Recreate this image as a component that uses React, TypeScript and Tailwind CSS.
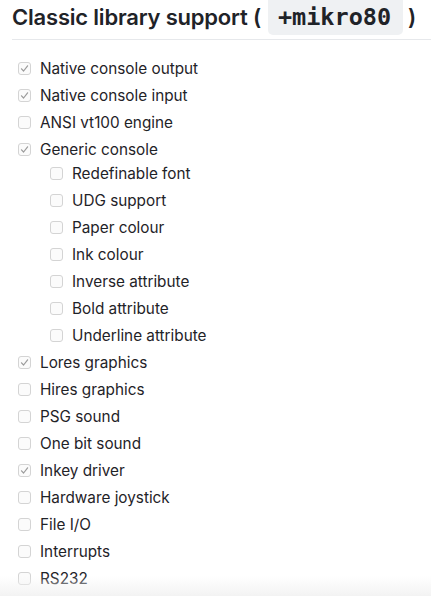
import React from "react";

type Item = { label: string; checked?: boolean; children?: Item[] };

const items: Item[] = [
  { label: "Native console output", checked: true },
  { label: "Native console input", checked: true },
  { label: "ANSI vt100 engine" },
  {
    label: "Generic console",
    checked: true,
    children: [
      { label: "Redefinable font" },
      { label: "UDG support" },
      { label: "Paper colour" },
      { label: "Ink colour" },
      { label: "Inverse attribute" },
      { label: "Bold attribute" },
      { label: "Underline attribute" },
    ],
  },
  { label: "Lores graphics", checked: true },
  { label: "Hires graphics" },
  { label: "PSG sound" },
  { label: "One bit sound" },
  { label: "Inkey driver", checked: true },
  { label: "Hardware joystick" },
  { label: "File I/O" },
  { label: "Interrupts" },
  { label: "RS232" },
];

function Box({ checked }: { checked?: boolean }) {
  return (
    <span className="flex h-[13px] w-[13px] shrink-0 items-center justify-center rounded-[3px] border border-[#d4d4d4] bg-[#fbfbfb]">
      {checked && (
        <svg width="9" height="9" viewBox="0 0 9 9" fill="none">
          <path d="M1.5 4.8 L3.6 7 L7.6 1.8" stroke="#9a9a9a" strokeWidth="1.2" strokeLinecap="round" strokeLinejoin="round" />
        </svg>
      )}
    </span>
  );
}

function List({ data, nested }: { data: Item[]; nested?: boolean }) {
  return (
    <ul className={nested ? "flex flex-col gap-[4px] pl-[32px]" : "flex flex-col gap-[4px] pl-[18px]"}>
      {data.map((it) => (
        <li key={it.label} className="flex flex-col gap-[1px]">
          <div className="flex h-[23px] items-center gap-[9px]">
            <Box checked={it.checked} />
            <span className="whitespace-nowrap">{it.label}</span>
          </div>
          {it.children && <List data={it.children} nested />}
        </li>
      ))}
    </ul>
  );
}

export default function App() {
  return (
    <div
      className="relative h-[596px] w-[431px] overflow-hidden bg-white text-[15.3px] leading-[23px] text-[#1f2328]"
      style={{ fontFamily: "Inter, 'Liberation Sans', sans-serif" }}
    >
      <div className="pl-3">
        <h2 className="flex h-[40px] items-start border-b border-[#e6e8eb] text-[22px] font-semibold leading-[35px] tracking-[-0.2px]">
          <span className="whitespace-nowrap">Classic library support (</span>
          <code
            className="ml-[7px] mr-[5px] rounded-b-[5px] bg-[#eff1f3] pl-[10px] pr-[12px] text-[23.5px] font-bold leading-[35px] tracking-[0px]"
            style={{ fontFamily: "'DejaVu Sans Mono', 'Liberation Mono', monospace" }}
          >
            +mikro80
          </code>
          <span>)</span>
        </h2>
      </div>
      <div className="pt-[16.5px]">
        <List data={items} />
      </div>
      <div className="pointer-events-none absolute bottom-0 left-0 right-0 h-[20px] bg-gradient-to-b from-white/0 to-[#f3f3f3]" />
    </div>
  );
}
